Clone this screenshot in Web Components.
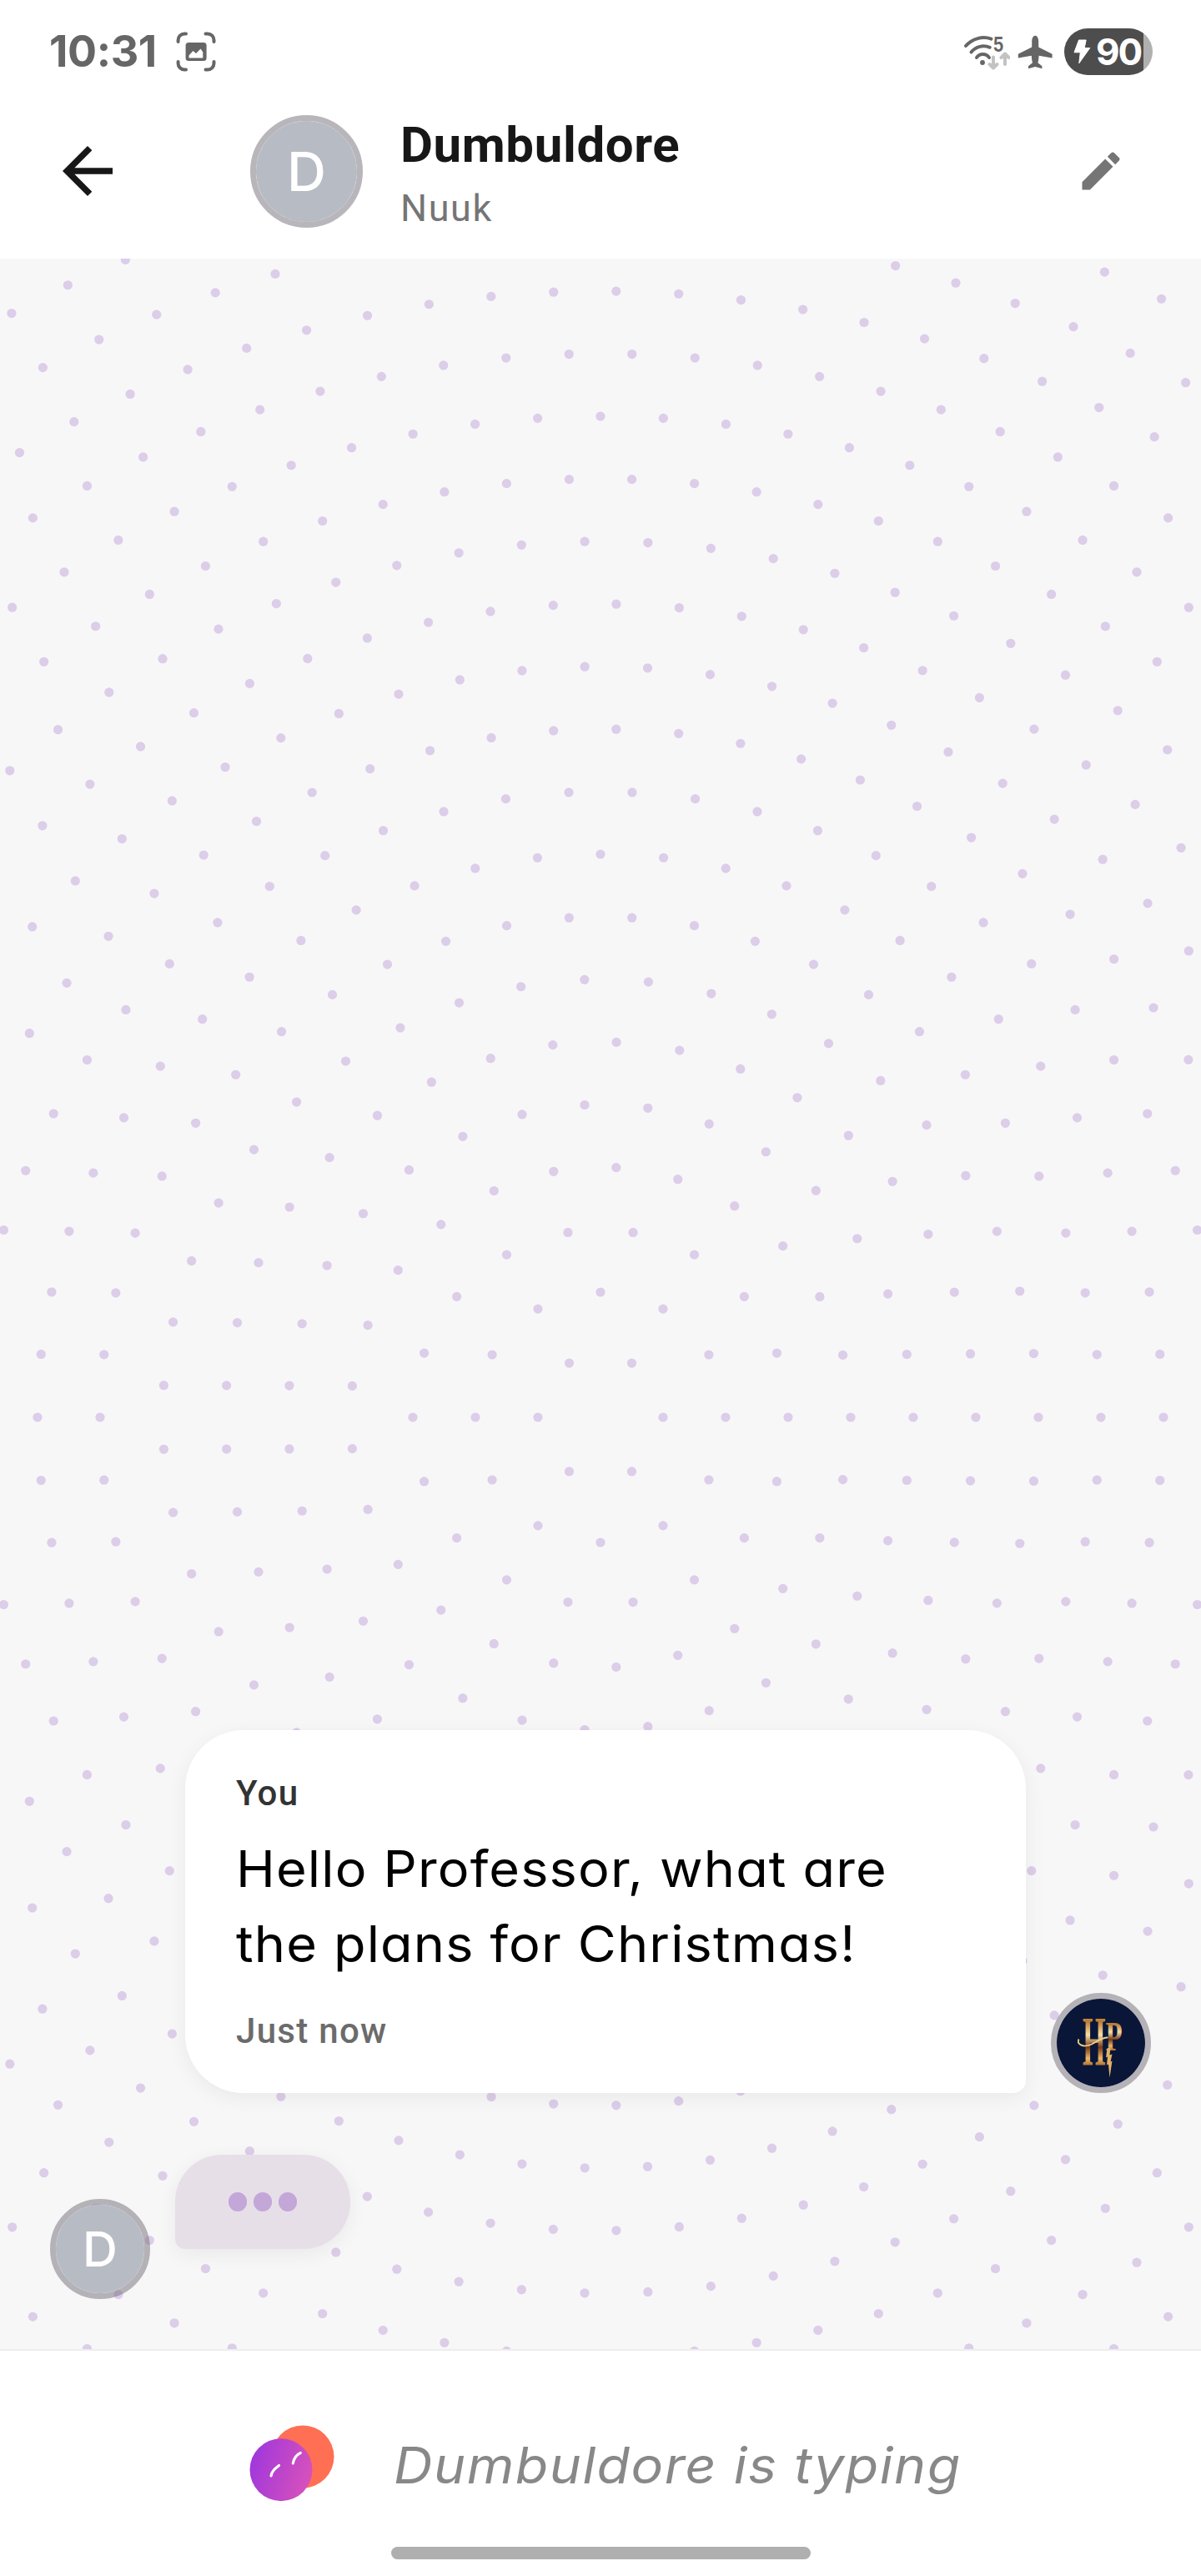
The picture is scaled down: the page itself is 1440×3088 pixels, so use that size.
<!DOCTYPE html>
<html lang="en">
<head>
<meta charset="utf-8">
<title>Chat</title>
<style>
html, body{
    margin: 0;
    padding: 0;
    background: #fff;
}
body{
    font-family: Roboto, "Liberation Sans", sans-serif;
}
</style>
</head>
<body>
<chat-screen>
    <status-bar slot="top" time="10:31" battery="90"></status-bar>
    <chat-header slot="top" initial="D">
        <span slot="name">Dumbuldore</span>
        <span slot="place">Nuuk</span>
    </chat-header>
    <message-row>
        <span slot="author">You</span>
        Hello Professor, what are the plans for Christmas!
        <span slot="time">Just now</span>
    </message-row>
    <typing-row initial="D"></typing-row>
    <typing-footer slot="bottom">Dumbuldore is typing</typing-footer>
</chat-screen>

<script>
function define(name, html, setup) {
    const template = document.createElement('template');
    template.innerHTML = html;
    customElements.define(name, class extends HTMLElement {
        constructor() {
            super();
            this.attachShadow({mode:'open'});
            this.shadowRoot.appendChild(template.content.cloneNode(true));
        }
        connectedCallback() {
            if (setup) setup(this, this.shadowRoot);
        }
    });
}

// rings of dots, 75px apart, as many on each ring as fit
define('dot-wallpaper', `
<style>
:host{
    display: block;
    width: 1440px;
    height: 2778px;
}
svg{
    display: block;
}
</style>
<svg width="1440" height="2778" viewBox="-720 -1389 1440 2778" fill="#dccde9"></svg>
`, (el, root) => {
    const gap = 75;
    let dots = '';
    for (let ring = 1; ring <= 21; ring++) {
        const count = Math.floor(2 * Math.PI * ring);
        for (let i = 0; i < count; i++) {
            const a = 2 * Math.PI * i / count;
            const x = Math.cos(a) * ring * gap;
            const y = Math.sin(a) * ring * gap;
            // a dot whose center is off the canvas is left out
            if (Math.abs(x) > 720 || Math.abs(y) > 1389) continue;
            dots += `<circle cx="${x.toFixed(2)}" cy="${y.toFixed(2)}" r="5.6"/>`;
        }
    }
    root.querySelector('svg').innerHTML = dots;
});

define('user-avatar', `
<style>
:host{
    display: flex;
    flex: none;
    box-sizing: border-box;
    width: var(--size, 120px);
    height: var(--size, 120px);
    border: 7.5px solid rgba(115, 109, 120, .5);
    border-radius: 50%;
}
div{
    flex: 1;
    display: flex;
    align-items: center;
    justify-content: center;
    border-radius: 50%;
    overflow: hidden;
    background: var(--fill, #b7bbc4);
    color: #fff;
    font: 500 var(--letter, 58px)/1 Inter, sans-serif;
}
</style>
<div><slot></slot></div>
`);

define('status-bar', `
<style>
:host{
    display: flex;
    align-items: center;
    box-sizing: border-box;
    height: 100px;
    padding: 24px 58px 0 59px;
    color: #666;
}
svg{
    display: block;
}
.time{
    font: 700 52px/56px Inter, sans-serif;
    letter-spacing: -.4px;
    width: 152px;
}
.icons{
    display: flex;
    align-items: center;
    margin-left: auto;
}
.wifi{
    margin-right: 9px;
}
.plane{
    margin-right: 14px;
}
.battery{
    display: flex;
    align-items: center;
    box-sizing: border-box;
    width: 106px;
    height: 56px;
    padding-left: 11px;
    border-radius: 28px;
    background: linear-gradient(90deg, #4d4d4d 94.6px, #b0b0b0 94.6px);
    color: #fff;
    font: 700 44px/56px Inter, sans-serif;
    letter-spacing: -2px;
}
.battery svg{
    margin-right: 6px;
}
</style>
<span class="time"></span>
<svg width="48" height="48" viewBox="0 0 48 48">
    <g fill="none" stroke="#666" stroke-width="4" stroke-linecap="round">
        <path d="M2.600 12V10a7.500 7.500 0 0 1 7.500-7.500H12M35.500 2.500H38a7.500 7.500 0 0 1 7.500 7.500V12M45.500 36v2a7.500 7.500 0 0 1-7.500 7.500H35.500M12 45.500H10A7.500 7.500 0 0 1 2.600 38V36"/>
    </g>
    <rect x="11.600" y="13" width="25" height="22" rx="3.500" fill="#666"/>
    <path d="M15.500 31.500v-3l5-5.500 3.500 3 5.500-5.500 2.800 4v7z" fill="#fff"/>
</svg>
<div class="icons">
    <svg class="wifi" width="56" height="48" viewBox="0 0 56 48">
        <g fill="none" stroke="#666" stroke-width="4" stroke-linecap="round">
            <path d="M3 17C11 8 23 5 33.500 8.600"/>
            <path d="M9.500 24.500C15 17.500 24 15.600 31.800 18.800"/>
            <path d="M16 31C19.500 25.800 27.500 25.800 31 31"/>
        </g>
        <circle cx="23" cy="37" r="2.900" fill="#666"/>
        <text x="35.500" y="24" font-family="Inter, sans-serif" font-size="24" font-weight="700" textLength="13" lengthAdjust="spacingAndGlyphs" fill="#666">5</text>
        <g fill="none" stroke="#c3c3c3" stroke-width="4" stroke-linecap="round" stroke-linejoin="round">
            <path d="M36 30.500V43M31.500 39l4.500 4.500 4.500-4.500M50 39V27M45.500 31l4.500-4.500 4.500 4.500"/>
        </g>
    </svg>
    <svg class="plane" width="42" height="41" viewBox="0 0 42 41">
        <path fill="#666" d="M21.200.7c-2.600 0-4 3.500-4 7V14.500L.8 22.800v4.600l16-2.600c.2 4 .6 6.500 1.200 8.400L13 37.200v3l8.200-2.200 8.200 2.200v-3l-5-4c.6-1.900 1-4.400 1.200-8.400l16 2.600v-4.600L25.200 14.500V7.700c0-3.500-1.400-7-4-7z"/>
    </svg>
    <div class="battery">
        <svg width="21" height="30" viewBox="0 0 21 30"><path fill="#fff" stroke="#fff" stroke-linejoin="round" d="M6.500 1h8.700l-2 9.500h6.600L6.800 28.800l1.500-13H1z"/></svg>
        <span></span>
    </div>
</div>
`, (el, root) => {
    root.querySelector('.time').textContent = el.getAttribute('time');
    root.querySelector('.battery span').textContent = el.getAttribute('battery');
});

define('chat-header', `
<style>
:host{
    display: flex;
    align-items: center;
    box-sizing: border-box;
    height: 210px;
    padding: 0 90px 0 60px;
}
user-avatar{
    --size: 135px;
    --letter: 65px;
    margin: 0 45px 0 150px;
}
.titles{
    display: flex;
    flex-direction: column;
    gap: 11px;
    flex: 1;
    margin-top: 8px;
}
.name{
    font-size: 60px;
    line-height: 70px;
    font-weight: 700;
    letter-spacing: .6px;
    color: #171717;
}
.place{
    font-size: 45px;
    line-height: 60px;
    color: #757575;
    letter-spacing: 1.6px;
}
</style>
<svg width="90" height="90" viewBox="0 0 24 24"><path fill="#171717" d="M20 11H7.830l5.590-5.590L12 4l-8 8 8 8 1.410-1.410L7.830 13H20v-2z"/></svg>
<user-avatar></user-avatar>
<div class="titles">
    <div class="name"><slot name="name"></slot></div>
    <div class="place"><slot name="place"></slot></div>
</div>
<svg width="60" height="60" viewBox="0 0 24 24"><path fill="#757575" d="M3 17.250V21h3.750L17.810 9.940l-3.750-3.750L3 17.250zM20.710 7.040c.39-.39.39-1.020 0-1.410l-2.340-2.340c-.39-.39-1.020-.39-1.410 0l-1.830 1.830 3.750 3.750 1.830-1.830z"/></svg>
`, (el, root) => {
    root.querySelector('user-avatar').textContent = el.getAttribute('initial');
});

define('message-row', `
<style>
:host{
    display: flex;
    align-items: flex-end;
    justify-content: flex-end;
    gap: 30px;
}
.bubble{
    box-sizing: border-box;
    width: 1008px;
    padding: 51px 60px 49px 61px;
    border-radius: 70px 70px 15px 70px;
    background: #fff;
    box-shadow: 0 6px 24px rgba(0, 0, 0, .06);
}
.author, .time{
    font-size: 42px;
    line-height: 50px;
    font-weight: 500;
    letter-spacing: 1.3px;
}
.author{
    color: #333;
}
.time{
    color: #6b6b6b;
}
.text{
    margin: 20px 0 35px;
    width: 790px;
    font: 400 60px/90px Inter, sans-serif;
    font-feature-settings: "cv11";
    letter-spacing: 1.1px;
    transform: scaleX(1.05);
    transform-origin: 0 0;
    color: #000;
}
user-avatar{
    --fill: #0a1638;
}
</style>
<div class="bubble">
    <div class="author"><slot name="author"></slot></div>
    <div class="text"><slot></slot></div>
    <div class="time"><slot name="time"></slot></div>
</div>
<user-avatar>
    <svg width="105" height="105" viewBox="7.500 7.500 105 105">
        <defs>
            <linearGradient id="gold" x1="0" y1="0" x2="0" y2="1">
                <stop offset="0" stop-color="#f3d79a"/>
                <stop offset=".25" stop-color="#b87a35"/>
                <stop offset=".42" stop-color="#f6dfa6"/>
                <stop offset=".58" stop-color="#7a3b14"/>
                <stop offset=".72" stop-color="#e9b865"/>
                <stop offset=".86" stop-color="#8a4a1c"/>
                <stop offset="1" stop-color="#f3d79a"/>
            </linearGradient>
        </defs>
        <g fill="url(#gold)" font-family="Liberation Serif, serif" font-weight="700">
            <text transform="translate(37.500 86) scale(.42 1)" font-size="85">H</text>
            <text transform="translate(65 68) scale(.66 1)" font-size="50">P</text>
        </g>
        <path d="M33 55c-3 6 5 10 13 7s13-9 22-9" fill="none" stroke="#f0cf8b" stroke-width="1.800"/>
        <path d="M67 66l4-1-1 9 3-1-2 9 2-1-3 20-1.500-16-2 1 1-10-2 1z" fill="#e3b367"/>
    </svg>
</user-avatar>
`);

define('typing-row', `
<style>
:host{
    display: flex;
    align-items: flex-end;
    gap: 30px;
}
.bubble{
    display: flex;
    align-items: center;
    justify-content: center;
    gap: 7.500px;
    width: 210px;
    height: 113px;
    margin-bottom: 60px;
    border-radius: 56px 56px 56px 12px;
    background: #e7dfe8;
    box-shadow: 0 6px 24px rgba(0, 0, 0, .06);
}
i{
    width: 22.500px;
    height: 22.500px;
    border-radius: 50%;
    background: #c2a7d8;
}
</style>
<user-avatar></user-avatar>
<div class="bubble"><i></i><i></i><i></i></div>
`, (el, root) => {
    root.querySelector('user-avatar').textContent = el.getAttribute('initial');
});

define('typing-footer', `
<style>
:host{
    display: flex;
    flex-direction: column;
    align-items: center;
    box-sizing: border-box;
    height: 272px;
    padding: 89px 0 20px;
    border-top: 2px solid #eee;
    background: #fff;
}
.row{
    display: flex;
    align-self: stretch;
    gap: 71px;
    padding-left: 299px;
}
.text{
    margin-top: 3px;
    font: italic 400 60px/90px Inter, sans-serif;
    letter-spacing: 1.4px;
    transform: scaleX(1.075);
    transform-origin: 0 0;
    color: #888;
    white-space: nowrap;
}
.home{
    width: 503px;
    height: 15px;
    margin-top: auto;
    border-radius: 7.500px;
    background: #afafaf;
}
</style>
<div class="row">
    <svg width="102" height="92" viewBox="0 0 102 92">
        <defs>
            <linearGradient id="violet" x1="0" y1=".35" x2="1" y2=".65">
                <stop offset="0" stop-color="#a037dc"/>
                <stop offset="1" stop-color="#d852ba"/>
            </linearGradient>
        </defs>
        <circle cx="64" cy="38" r="37.500" fill="#ff6f54"/>
        <circle cx="38" cy="53.700" r="37.500" fill="url(#violet)"/>
        <path d="M26 61c1-6 5-9 9.500-12.500M52.300 46c1-6 3.500-10 9-12.500" fill="none" stroke="#fff" stroke-width="3.200" stroke-linecap="round"/>
    </svg>
    <div class="text"><slot></slot></div>
</div>
<div class="home"></div>
`);

define('chat-screen', `
<style>
:host{
    display: flex;
    flex-direction: column;
    width: 1440px;
    height: 3088px;
    background: #fff;
}
.chat{
    position: relative;
    flex: 1;
    display: flex;
    flex-direction: column;
    justify-content: flex-end;
    gap: 74px;
    padding: 60px;
    overflow: hidden;
    background: #f7f7f7;
}
dot-wallpaper{
    position: absolute;
    top: 0;
    left: 0;
}
::slotted(*){
    position: relative;
}
</style>
<slot name="top"></slot>
<div class="chat">
    <dot-wallpaper></dot-wallpaper>
    <slot></slot>
</div>
<slot name="bottom"></slot>
`);
</script>
</body>
</html>
